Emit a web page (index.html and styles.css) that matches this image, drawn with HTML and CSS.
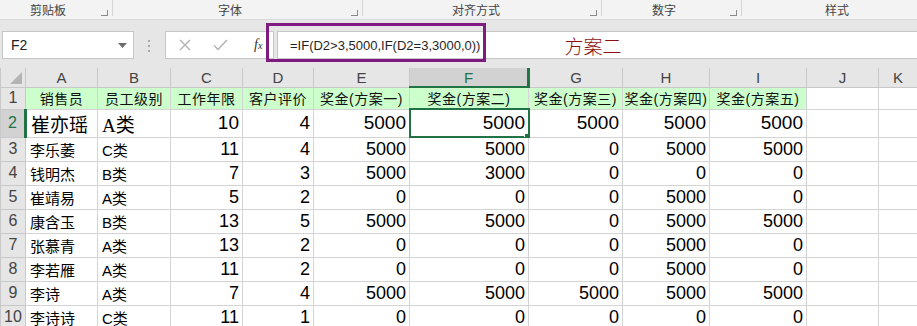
FILE: index.html
```html
<!DOCTYPE html>
<html lang="zh-CN">
<head>
<meta charset="UTF-8">
<title>奖金方案</title>
<link rel="stylesheet" href="styles.css">
</head>
<body>

<div class="ribbon">
    <div class="group g1"><span>剪贴板</span><i class="launcher"></i></div>
    <div class="group g2"><span>字体</span><i class="launcher"></i></div>
    <div class="group g3"><span>对齐方式</span><i class="launcher"></i></div>
    <div class="group g4"><span>数字</span><i class="launcher"></i></div>
    <div class="group g5"><span>样式</span></div>
</div>

<div class="fbar">
    <div class="namebox">
        <span>F2</span>
        <svg width="9" height="5" viewBox="0 0 9 5"><path d="M0 0h9L4.5 5z" fill="#6d6d6d"/></svg>
    </div>
    <div class="grip">
        <svg width="3" height="13" viewBox="0 0 3 13"><rect x="0" y="0" width="2" height="2" fill="#aaa"/><rect x="0" y="5" width="2" height="2" fill="#aaa"/><rect x="0" y="10" width="2" height="2" fill="#aaa"/></svg>
    </div>
    <div class="fxbox">
        <svg width="12" height="12" viewBox="0 0 12 12"><path d="M1 1l10 10M11 1L1 11" stroke="#b3b3b3" stroke-width="1.4" fill="none"/></svg>
        <svg width="15" height="12" viewBox="0 0 15 12"><path d="M1 6.5l4 4L14 1" stroke="#b3b3b3" stroke-width="1.5" fill="none"/></svg>
        <span class="fx">f<sub>x</sub></span>
    </div>
    <div class="formula">
        <span class="ftext">=IF(D2&gt;3,5000,IF(D2=3,3000,0))</span>
        <span class="note">方案二</span>
    </div>
    <div class="mark"></div>
</div>

<table class="sheet">
    <colgroup>
        <col style="width:25px"><col style="width:72px"><col style="width:73px"><col style="width:72px">
        <col style="width:71px"><col style="width:96px"><col style="width:119px"><col style="width:94px">
        <col style="width:87px"><col style="width:97px"><col style="width:72px"><col style="width:39px">
    </colgroup>
    <tr class="colhead">
        <th class="corner"><i></i></th>
        <th>A</th><th>B</th><th>C</th><th>D</th><th>E</th><th class="sel">F</th><th>G</th><th>H</th><th>I</th><th>J</th><th class="k">K</th>
    </tr>
    <tr class="r1">
        <th>1</th>
        <td class="g">销售员</td><td class="g">员工级别</td><td class="g">工作年限</td><td class="g">客户评价</td>
        <td class="g">奖金(方案一)</td><td class="g">奖金(方案二)</td><td class="g">奖金(方案三)</td><td class="g">奖金(方案四)</td><td class="g">奖金(方案五)</td>
        <td></td><td></td>
    </tr>
    <tr class="r2">
        <th class="sel">2</th>
        <td class="t big">崔亦瑶</td><td class="t big">A类</td><td class="n">10</td><td class="n">4</td>
        <td class="n">5000</td><td class="n active">5000<b class="handle"></b></td><td class="n">5000</td><td class="n">5000</td><td class="n">5000</td>
        <td></td><td></td>
    </tr>
    <tr>
        <th>3</th>
        <td class="t">李乐萎</td><td class="t">C类</td><td class="n">11</td><td class="n">4</td>
        <td class="n">5000</td><td class="n">5000</td><td class="n">0</td><td class="n">5000</td><td class="n">5000</td>
        <td></td><td></td>
    </tr>
    <tr>
        <th>4</th>
        <td class="t">钱明杰</td><td class="t">B类</td><td class="n">7</td><td class="n">3</td>
        <td class="n">5000</td><td class="n">3000</td><td class="n">0</td><td class="n">0</td><td class="n">0</td>
        <td></td><td></td>
    </tr>
    <tr>
        <th>5</th>
        <td class="t">崔靖易</td><td class="t">A类</td><td class="n">5</td><td class="n">2</td>
        <td class="n">0</td><td class="n">0</td><td class="n">0</td><td class="n">5000</td><td class="n">0</td>
        <td></td><td></td>
    </tr>
    <tr>
        <th>6</th>
        <td class="t">康含玉</td><td class="t">B类</td><td class="n">13</td><td class="n">5</td>
        <td class="n">5000</td><td class="n">5000</td><td class="n">0</td><td class="n">5000</td><td class="n">5000</td>
        <td></td><td></td>
    </tr>
    <tr>
        <th>7</th>
        <td class="t">张慕青</td><td class="t">A类</td><td class="n">13</td><td class="n">2</td>
        <td class="n">0</td><td class="n">0</td><td class="n">0</td><td class="n">5000</td><td class="n">0</td>
        <td></td><td></td>
    </tr>
    <tr>
        <th>8</th>
        <td class="t">李若雁</td><td class="t">A类</td><td class="n">11</td><td class="n">2</td>
        <td class="n">0</td><td class="n">0</td><td class="n">0</td><td class="n">5000</td><td class="n">0</td>
        <td></td><td></td>
    </tr>
    <tr>
        <th>9</th>
        <td class="t">李诗</td><td class="t">A类</td><td class="n">7</td><td class="n">4</td>
        <td class="n">5000</td><td class="n">5000</td><td class="n">5000</td><td class="n">5000</td><td class="n">5000</td>
        <td></td><td></td>
    </tr>
    <tr>
        <th>10</th>
        <td class="t">李诗诗</td><td class="t">C类</td><td class="n">11</td><td class="n">1</td>
        <td class="n">0</td><td class="n">0</td><td class="n">0</td><td class="n">0</td><td class="n">0</td>
        <td></td><td></td>
    </tr>
</table>

</body>
</html>
```

FILE: styles.css
```css
body {
    margin: 0;
    font-family: "Liberation Sans", "Noto Sans CJK SC", sans-serif;
    background: #ffffff;
    color: #000;
    overflow: hidden;
}
.ribbon {
    display: flex;
    height: 20px;
    background: #f3f3f3;
    border-bottom: 1px solid #dadada;
    box-sizing: border-box;
    font-size: 12px;
    color: #444;
}
.group {
    display: flex;
    align-items: center;
    height: 16px;
    box-sizing: border-box;
    border-right: 1px solid #d6d6d6;
    padding-top: 2px;
}
.g1 { width: 113px; padding-left: 30px; }
.g2 { width: 250px; padding-left: 105px; }
.g3 { width: 239px; padding-left: 89px; }
.g4 { width: 140px; padding-left: 50px; }
.g5 { flex: 1; padding-left: 83px; border-right: none; }
.launcher {
    margin-left: auto;
    margin-right: 4px;
    margin-top: 8px;
    width: 6px;
    height: 5px;
    border-right: 1px solid #8a8a8a;
    border-bottom: 1px solid #8a8a8a;
}
.fbar {
    position: relative;
    display: flex;
    align-items: center;
    height: 48px;
    background: #e6e6e6;
    padding-left: 2px;
    box-sizing: border-box;
    padding-top: 2px;
}
.namebox {
    display: flex;
    align-items: center;
    justify-content: space-between;
    width: 132px;
    height: 28px;
    box-sizing: border-box;
    background: #fff;
    border: 1px solid #c6c6c6;
    padding: 0 6px 0 8px;
    font-size: 14px;
    color: #222;
}
.grip {
    width: 31px;
    display: flex;
    justify-content: center;
    padding-top: 2px;
}
.fxbox {
    display: flex;
    align-items: center;
    width: 109px;
    height: 28px;
    box-sizing: border-box;
    background: #fff;
    border: 1px solid #c6c6c6;
    padding-left: 13px;
    gap: 22px;
}
.fx {
    font-family: "Liberation Serif", serif;
    font-style: italic;
    font-size: 14px;
    color: #333;
    margin-left: 4px;
}
.fx sub {
    font-size: 10px;
    vertical-align: 0;
}
.formula {
    flex: 1;
    display: flex;
    align-items: center;
    height: 28px;
    margin-left: 3px;
    box-sizing: border-box;
    background: #fff;
    border-top: 1px solid #c6c6c6;
    border-bottom: 1px solid #c6c6c6;
    border-left: 1px solid #c6c6c6;
    padding-left: 12px;
    font-size: 13px;
    color: #1f1f1f;
}
.note {
    margin-left: 84px;
    font-size: 19px;
    color: #8b1010;
    font-family: "Noto Sans CJK SC", sans-serif;
    font-weight: 300;
}
.mark {
    position: absolute;
    left: 266px;
    top: 3px;
    width: 220px;
    height: 39px;
    box-sizing: border-box;
    border: 3px solid #7f1a80;
}
.sheet {
    border-collapse: collapse;
    table-layout: fixed;
    width: 917px;
}
.sheet th, .sheet td {
    border: 1px solid #d4d4d4;
    padding: 0;
    white-space: nowrap;
    overflow: hidden;
}
.sheet th {
    background: #e6e6e6;
    font-weight: normal;
    font-size: 15px;
    color: #444;
    border-color: #c8c8c8;
}
.colhead { height: 19px; }
.colhead th { border-top: none; }
.colhead th.sel {
    background: #d2d2d2;
    color: #217346;
    border-bottom: 2px solid #217346;
}
.corner { position: relative; }
.corner i {
    position: absolute;
    right: 3px;
    bottom: 3px;
    width: 0;
    height: 0;
    border-left: 12px solid transparent;
    border-bottom: 12px solid #b4b4b4;
}
.r1 { height: 22px; }
.r2 { height: 26px; }
tr { height: 24px; }
.sheet tr > th:first-child { font-size: 16px; }
.sheet th.sel {
    background: #d2d2d2;
    color: #217346;
    border-right: 3px solid #217346;
}
.g {
    background: #ccffcc;
    text-align: center;
    font-size: 14px;
    letter-spacing: 0.5px;
    color: #111;
}
.t {
    padding-left: 4px !important;
    font-size: 15px;
}
.big {
    font-family: "Liberation Serif", "Noto Sans CJK SC", serif;
    font-size: 19px;
    font-weight: 400;
}
.n {
    text-align: right;
    padding-right: 3px !important;
    font-size: 18px;
}
.r2 .n { font-size: 19px; }
.active {
    position: relative;
    outline: 2px solid #217346;
    outline-offset: -1px;
}
.handle {
    position: absolute;
    right: -3px;
    bottom: -3px;
    width: 5px;
    height: 5px;
    background: #217346;
    border: 1px solid #fff;
}
```
